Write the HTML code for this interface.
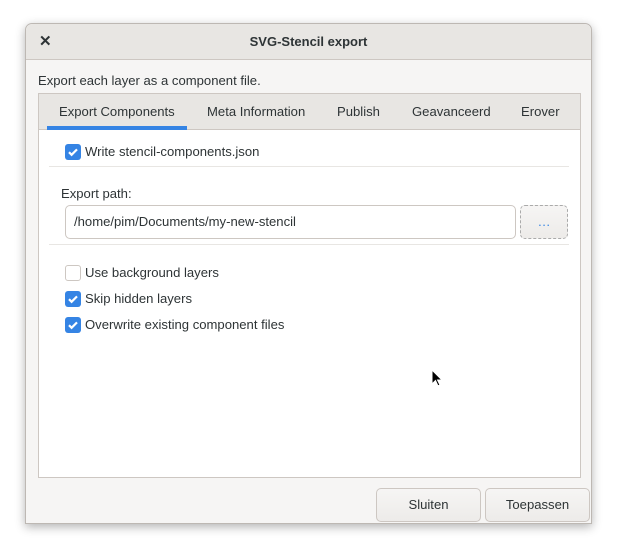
<!DOCTYPE html>
<html><head><style>
*{box-sizing:border-box}
body{margin:0;width:618px;height:553px;background:#fff;font-family:"Liberation Sans",sans-serif;font-size:13.1px;color:#2e3436;position:relative;overflow:hidden}
.win{position:absolute;left:25px;top:23px;width:567px;height:501px;background:#f6f5f4;border:1px solid #bdb8b3;border-radius:7px 7px 0 0;box-shadow:0 3px 10px rgba(0,0,0,.3)}
.title{position:absolute;left:0;top:0;right:0;height:36px;background:#e8e6e3;border-bottom:1px solid #cdc7c2;border-radius:7px 7px 0 0;text-align:center;line-height:36px;font-weight:bold;font-size:13px;color:#2e3436}
.x{position:absolute;left:13px;top:0;font-size:15px;font-weight:bold}
.abs{position:absolute}
.nb{position:absolute;left:12px;top:69px;width:543px;height:385px;border:1px solid #cdc7c2;background:#fff}
.tabs{position:absolute;left:0;top:0;right:0;height:36px;background:#e8e6e3;border-bottom:1px solid #cdc7c2}
.tab{position:absolute;top:0;height:36px;line-height:36px;color:#2e3436}
.cb{position:absolute;width:16px;height:16px;border-radius:3px;background:#3584e4}
.cb svg{position:absolute;left:2px;top:2px}
.cbo{background:#fff;border:1px solid #cdc7c2}
.btn{position:absolute;border:1px solid #cdc7c2;border-radius:5px;background:linear-gradient(#f6f5f4,#edebe9);text-align:center}
</style></head><body>
<div class="win">
 <div class="title"><span class="x">✕</span>SVG-Stencil export</div>
 <div class="abs" style="left:12px;top:49px">Export each layer as a component file.</div>
 <div class="nb">
  <div class="tabs">
   <div class="tab" style="left:20px">Export Components</div>
   <div style="position:absolute;left:8px;top:32px;width:140px;height:4px;background:#3584e4"></div>
   <div class="tab" style="left:168px">Meta Information</div>
   <div class="tab" style="left:298px">Publish</div>
   <div class="tab" style="left:373px">Geavanceerd</div>
   <div class="tab" style="left:482px">Erover</div>
  </div>
  <div class="cb" style="left:26px;top:50px"><svg width="12" height="12" viewBox="0 0 12 12"><path d="M2 6.2l2.6 2.6L10 3.4" stroke="#fff" stroke-width="2.2" fill="none"/></svg></div>
  <div class="abs" style="left:46px;top:50px">Write stencil-components.json</div>
  <div class="abs" style="left:10px;top:72px;width:520px;height:1px;background:#e8e6e3"></div>
  <div class="abs" style="left:22px;top:92px">Export path:</div>
  <div class="abs" style="left:26px;top:111px;width:451px;height:34px;border:1px solid #cdc7c2;border-radius:5px;padding-left:8px;line-height:32px">/home/pim/Documents/my-new-stencil</div>
  <div class="btn" style="left:481px;top:111px;width:48px;height:34px;line-height:32px;color:#3584e4;border:1px dashed #aaa">…</div>
  <div class="abs" style="left:10px;top:150px;width:520px;height:1px;background:#e8e6e3"></div>
  <div class="cb cbo" style="left:26px;top:171px"></div>
  <div class="abs" style="left:46px;top:171px">Use background layers</div>
  <div class="cb" style="left:26px;top:197px"><svg width="12" height="12" viewBox="0 0 12 12"><path d="M2 6.2l2.6 2.6L10 3.4" stroke="#fff" stroke-width="2.2" fill="none"/></svg></div>
  <div class="abs" style="left:46px;top:197px">Skip hidden layers</div>
  <div class="cb" style="left:26px;top:223px"><svg width="12" height="12" viewBox="0 0 12 12"><path d="M2 6.2l2.6 2.6L10 3.4" stroke="#fff" stroke-width="2.2" fill="none"/></svg></div>
  <div class="abs" style="left:46px;top:223px">Overwrite existing component files</div>
 </div>
 <div class="btn" style="left:350px;top:464px;width:105px;height:34px;line-height:32px">Sluiten</div>
 <div class="btn" style="left:459px;top:464px;width:105px;height:34px;line-height:32px">Toepassen</div>
</div>
<svg class="abs" style="position:absolute;left:431px;top:369px" width="12" height="19" viewBox="0 0 12 19"><path d="M1 1v14l3.5-3.5 2.5 5.5 2-1-2.5-5H11z" fill="#000" stroke="#fff" stroke-width="1"/></svg>
</body></html>
